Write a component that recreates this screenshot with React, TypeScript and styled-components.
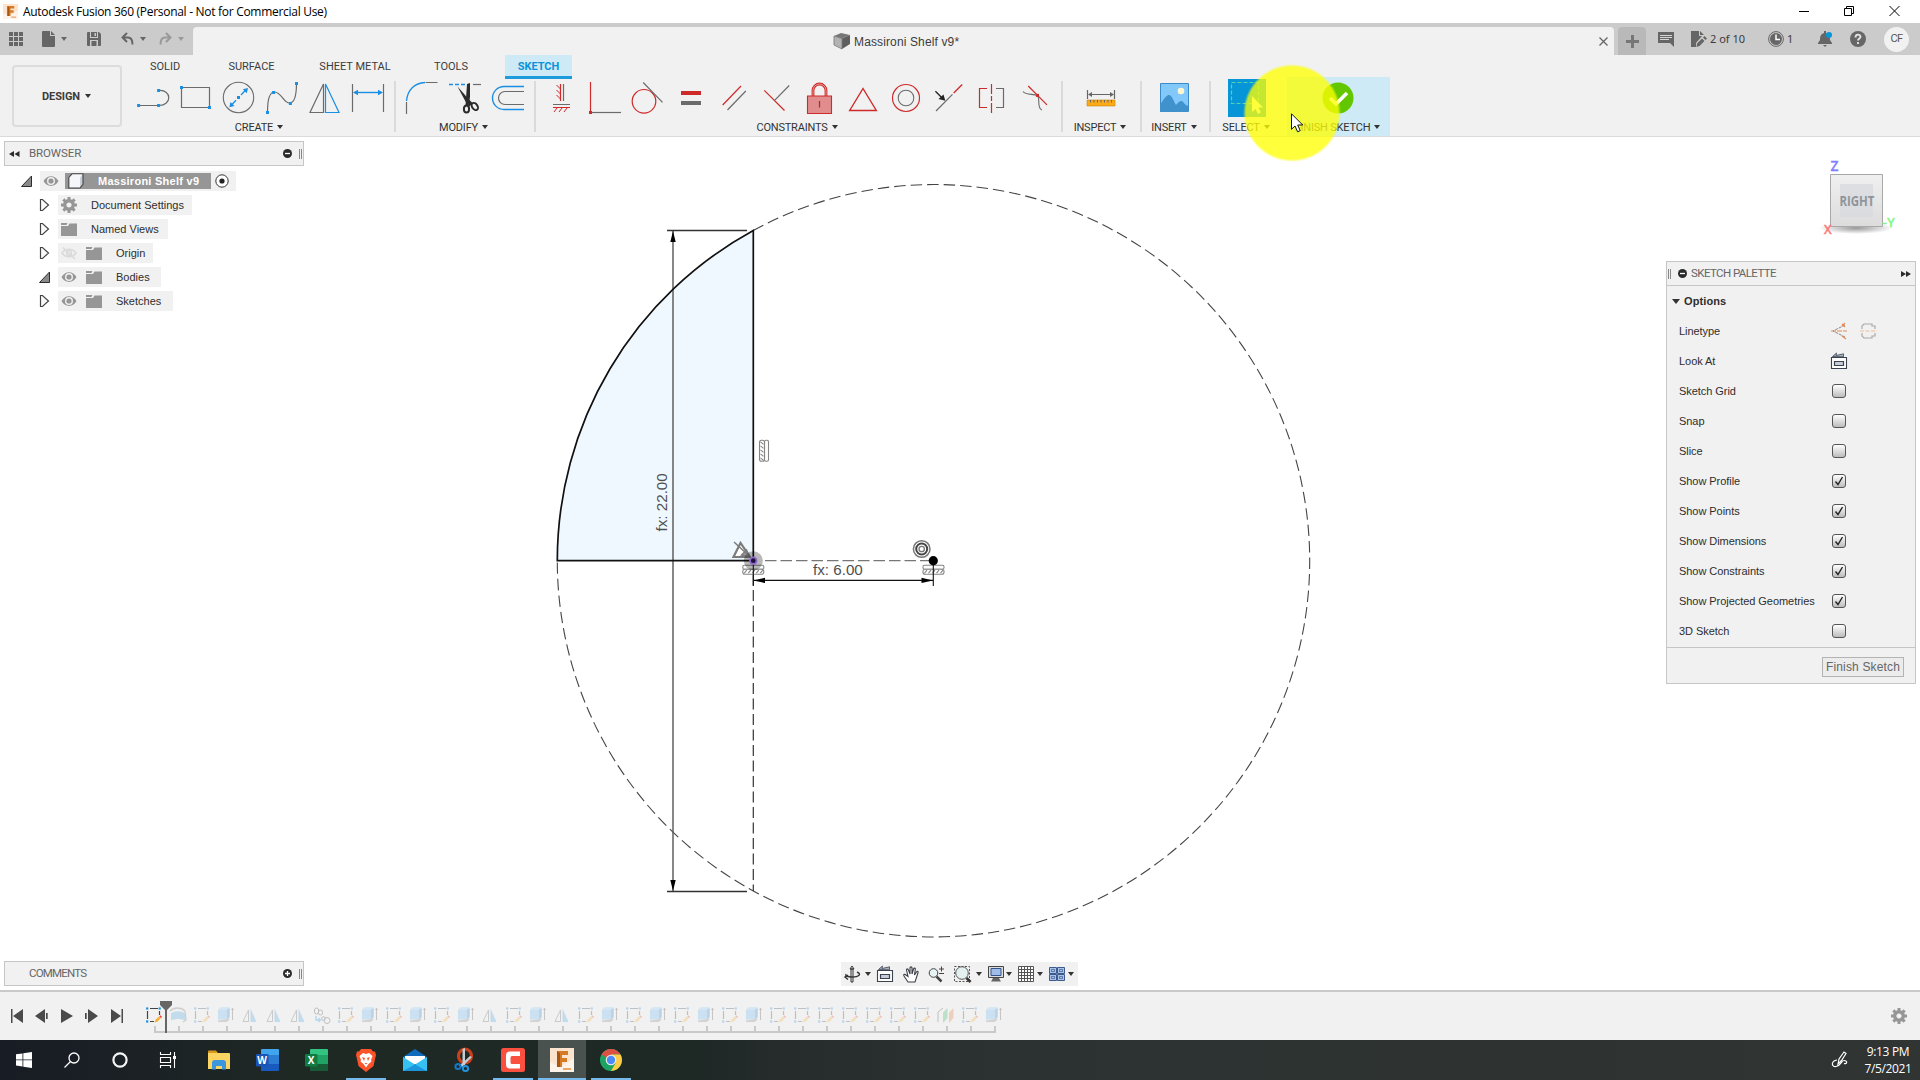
import React from "react";
import styled, { createGlobalStyle } from "styled-components";

const GlobalStyle = createGlobalStyle`
  * { box-sizing: border-box; }
  body { margin: 0; background: #fff; overflow: hidden; }
  svg { display: block; overflow: visible; flex: none; }
`;

const BLUE = "#1a8fe3";
const GRAY = "#6b6b6b";
const RED = "#cf2a2a";

const Window = styled.div`
  position: relative;
  display: flex;
  flex-direction: column;
  width: 1920px;
  height: 1080px;
  overflow: hidden;
  font-family: "Liberation Sans", Arial, sans-serif;
  font-size: 11px;
  color: #3c3c3c;
  background: #fff;
`;

/* ---------- shared bits ---------- */

type GlyphProps = { box: string; children: React.ReactNode };
const Glyph = ({ box, children }: GlyphProps) => {
  const [, , w, h] = box.split(" ").map(Number);
  return (
    <svg width={w} height={h} viewBox={box} fill="none" strokeWidth={1}>
      {children}
    </svg>
  );
};

const Caret = styled.i<{ $size?: number; $color?: string }>`
  flex: none;
  width: 0;
  height: 0;
  border-style: solid;
  border-width: ${(p) => (p.$size ?? 3) + 1}px ${(p) => p.$size ?? 3}px 0;
  border-color: ${(p) => p.$color ?? "#333"} transparent transparent;
`;

/* ---------- title bar ---------- */

const TitleBar = styled.header`
  display: flex;
  align-items: center;
  height: 23px;
  flex: none;
  padding: 0 20px 0 3px;
  background: #fff;
`;
const TitleText = styled.span`
  flex: 1;
  margin-left: 5px;
  font: 12px/20px "Open Sans", sans-serif;
  letter-spacing: -0.29px;
  color: #000;
`;
const WindowButtons = styled.div`
  display: flex;
  gap: 35px;
`;

const FusionMark = ({ size }: { size: number }) => (
  <svg width={size} height={size} viewBox="0 0 24 24">
    <rect width="24" height="24" fill="#fbe3cd" />
    <path d="M0 24V14l10 5 14-9v14z" fill="#fdf3e8" />
    <path d="M7 3h11v4h-6v3h5v4h-5v5H7z" fill="#d67a26" />
    <path d="M7 3l3 2v14H7z" fill="#a75612" />
    <path d="M13 20h8v2h-8z" fill="#eda566" />
  </svg>
);

/* ---------- document tab strip ---------- */

const TabStrip = styled.div`
  display: flex;
  align-items: flex-end;
  height: 32px;
  flex: none;
  background: #cbcbcb;
`;
const QuickAccess = styled.div`
  display: flex;
  align-items: center;
  width: 193px;
  height: 32px;
  padding-left: 9px;
`;
const Gap = styled.span<{ $w: number }>`
  flex: none;
  width: ${(p) => p.$w}px;
`;
const DocumentTab = styled.div`
  display: flex;
  align-items: center;
  width: 1421px;
  height: 28px;
  padding-left: 641px;
  background: #f1f1f1;
  border-radius: 4px 4px 0 0;
`;
const DocumentName = styled.span`
  flex: 1;
  margin: 1px 0 0 4px;
  font-size: 12px;
  letter-spacing: 0.13px;
  color: #3c3c3c;
`;
const NewTab = styled.div`
  display: flex;
  align-items: center;
  justify-content: center;
  width: 28px;
  height: 28px;
  margin-left: 4px;
  background: #b9b9b9;
  border-radius: 4px 4px 0 0;
`;
const StatusArea = styled.div`
  display: flex;
  align-items: center;
  height: 32px;
  margin-left: 12px;
`;
const StatusText = styled.span<{ $w: number }>`
  width: ${(p) => p.$w}px;
  margin-left: 3px;
  font: 11px/16px "Noto Sans", sans-serif;
  white-space: nowrap;
`;
const Avatar = styled.div`
  display: flex;
  align-items: center;
  justify-content: center;
  width: 25px;
  height: 25px;
  border-radius: 50%;
  background: #f1f1f1;
  font: 11px/14px Roboto, sans-serif;
  letter-spacing: -0.5px;
  color: #555;
`;

/* ---------- ribbon ---------- */

const Ribbon = styled.div`
  display: flex;
  height: 82px;
  flex: none;
  background: #f1f1f1;
  border-bottom: 1px solid #dadada;
`;
const Workspace = styled.button`
  display: flex;
  align-items: center;
  justify-content: center;
  gap: 5px;
  width: 110px;
  height: 62px;
  margin: 10px 9px 0 12px;
  padding: 0 1px 0 0;
  background: none;
  border: 2px solid #dcdcdc;
  border-radius: 4px;
  font: bold 11px Roboto, sans-serif;
  letter-spacing: -0.1px;
  color: #3c3c3c;
`;
const RibbonBody = styled.div`
  display: flex;
  flex-direction: column;
`;
const TabRow = styled.nav`
  display: flex;
  height: 24px;
`;
const RibbonTab = styled.div<{ $w: number; $active?: boolean }>`
  width: ${(p) => p.$w}px;
  height: 24px;
  margin-left: ${(p) => (p.$active ? 9 : 0)}px;
  text-align: center;
  font: ${(p) => (p.$active ? "bold" : "normal")} 11px/23px Roboto, sans-serif;
  color: ${(p) => (p.$active ? "#0a93d8" : "#3c3c3c")};
  background: ${(p) => (p.$active ? "#cdeaf6" : "none")};
  border-bottom: ${(p) => (p.$active ? "3px solid #1e9bdc" : "none")};
`;
const ToolRow = styled.div`
  display: flex;
  height: 59px;
  margin-top: -2px;
`;
const ToolGroup = styled.section<{ $w?: number; $active?: boolean }>`
  width: ${(p) => (p.$w ? `${p.$w}px` : "auto")};
  margin-left: ${(p) => (p.$active ? 8 : 0)}px;
  background: ${(p) => (p.$active ? "#cdeaf6" : "none")};
`;
const ToolIcons = styled.div`
  display: flex;
  justify-content: center;
  height: 42px;
`;
const ToolLabel = styled.div`
  display: flex;
  align-items: center;
  justify-content: center;
  gap: 4px;
  height: 17px;
  padding: 1px 2px 0 0;
  font: 11px/16px Roboto, sans-serif;
  letter-spacing: -0.2px;
  color: #333;
  white-space: nowrap;
  & > i { margin-top: -2px; }
`;
const Separator = styled.div`
  width: 11px;
  padding: 4px 4px 0 5px;
  &::before {
    content: "";
    display: block;
    height: 51px;
    background: #dadada;
  }
`;

const Group = ({ label, w, active, children }: { label: string; w?: number; active?: boolean; children: React.ReactNode }) => (
  <ToolGroup $w={w} $active={active}>
    <ToolIcons>{children}</ToolIcons>
    <ToolLabel>
      {label}
      <Caret />
    </ToolLabel>
  </ToolGroup>
);

const Dot = ({ x, y, c = BLUE, s = 3 }: { x: number; y: number; c?: string; s?: number }) => (
  <rect x={x - s / 2} y={y - s / 2} width={s} height={s} fill={c} stroke="none" />
);

const createTools = [
  <>
    <path d="M139 105.5h20M159 90.5c13-1 13 15 0 15" stroke={GRAY} strokeWidth={1.2} />
    <Dot x={138.6} y={105.5} /><Dot x={158.6} y={105.5} /><Dot x={158.6} y={90.5} />
  </>,
  <>
    <path d="M181.5 87.5h28v20h-28z" stroke={GRAY} strokeWidth={1.2} />
    <Dot x={181.5} y={87.5} /><Dot x={209.5} y={107.5} />
  </>,
  <>
    <circle cx="238.5" cy="97.5" r="15.2" stroke={GRAY} strokeWidth={1.1} />
    <path d="M231 105.5l5-5.3M241 95l5-5.3" stroke={BLUE} strokeWidth={1.3} />
    <path d="M248 88l-1.2 5.2-4-4zM229.3 107.2l1.2-5.2 4 4z" fill={BLUE} />
    <Dot x={238.5} y={97.5} />
  </>,
  <>
    <path d="M267.5 112c0-10 1-20 7-20 7 0 9 11 15 11s7-10 7-20" stroke={GRAY} strokeWidth={1.2} />
    <Dot x={267.5} y={112.5} /><Dot x={273.6} y={92.5} /><Dot x={290.4} y={103.5} /><Dot x={296.5} y={83.5} />
  </>,
  <>
    <path d="M323.5 84v28.5h-13.5z" stroke={GRAY} strokeWidth={1.2} />
    <path d="M325.5 84v28.5h13.5z" stroke={BLUE} strokeWidth={1.2} />
  </>,
  <>
    <path d="M352.5 84v28M383.5 84v28" stroke={GRAY} strokeWidth={1.2} />
    <path d="M355 92.5h26" stroke={BLUE} strokeWidth={1.4} />
    <path d="M353 92.5l5-2.7v5.4zM383 92.5l-5-2.7v5.4z" fill={BLUE} />
  </>,
];

const modifyTools = [
  <>
    <path d="M406.5 101c1-11 8-18 18.5-18.5" stroke={BLUE} strokeWidth={1.3} />
    <path d="M406.5 102v12M425.5 82.5h12" stroke={GRAY} strokeWidth={1.2} />
  </>,
  <>
    <path d="M449 84.5h4m2 0h4m2 0h4" stroke={BLUE} strokeWidth={1.3} />
    <path d="M473 84.5h8" stroke={GRAY} strokeWidth={1.2} />
    <path d="M457.5 86.5l11 12.5 4 4-3 3.5-4-5z" fill="#2b2b2b" />
    <path d="M467 84l3-1v14l-1.5 9h-3z" fill="#2b2b2b" />
    <ellipse cx="466.5" cy="109" rx="2.6" ry="3.6" stroke="#2b2b2b" strokeWidth={2} />
    <ellipse cx="474.8" cy="106.5" rx="2.7" ry="3.9" transform="rotate(-35 474.8 106.5)" stroke="#2b2b2b" strokeWidth={2} />
  </>,
  <>
    <path d="M524 86.5h-20a11.5 11.5 0 0 0 0 23h20" stroke={BLUE} strokeWidth={1.4} />
    <path d="M524 91.5h-19a6.5 6.5 0 0 0 0 13h19" stroke={GRAY} strokeWidth={1.2} />
  </>,
];

const constraintTools = [
  <>
    <path d="M560.5 84v17M553 107.5h17" stroke={RED} strokeWidth={1.2} />
    <path d="M556.5 85l4 4m-4 1l4 4m-4 1l4 4M557 108l-3 4m8-4l-3 4m8-4l-3 4" stroke={RED} />
    <path d="M563.5 84v17M553 104.5h17" stroke={GRAY} strokeWidth={1.2} />
  </>,
  <>
    <path d="M590.5 82v29" stroke={RED} strokeWidth={1.2} />
    <path d="M592 112.5h29" stroke={GRAY} strokeWidth={1.2} />
    <Dot x={590.5} y={112.5} c={RED} />
  </>,
  <>
    <circle cx="644" cy="101.3" r="11.8" stroke={RED} strokeWidth={1.2} />
    <path d="M643.2 82.5l19.3 19.8" stroke={GRAY} strokeWidth={1.2} />
  </>,
  <>
    <path d="M681 91h20v4h-20z" fill={RED} />
    <path d="M681 101h20v4h-20z" fill={GRAY} />
  </>,
  <>
    <path d="M722.7 105l18.3-19" stroke={RED} strokeWidth={1.2} />
    <path d="M727.5 110l18.3-19" stroke={GRAY} strokeWidth={1.2} />
  </>,
  <>
    <path d="M764.3 90.3l20.2 20.2" stroke={RED} strokeWidth={1.2} />
    <path d="M774.6 100.3l14.6-14.8" stroke={GRAY} strokeWidth={1.2} />
  </>,
  <>
    <path d="M813 96v-5.5a6.5 6.5 0 0 1 13 0v5.5" stroke={RED} strokeWidth={2.8} />
    <path d="M813 96v-5.5a6.5 6.5 0 0 1 13 0v5.5" stroke="#e9a0a0" strokeWidth={0.9} />
    <path d="M807.5 96h24v17.5h-24z" fill="#e18d8d" stroke={RED} strokeWidth={1.1} />
    <path d="M819.5 101v6.5" stroke="#b22" strokeWidth={1.2} />
  </>,
  <path d="M863 88.5l13.3 22h-26.6z" stroke={RED} strokeWidth={1.4} />,
  <>
    <circle cx="906" cy="98" r="13.5" stroke={RED} strokeWidth={1.2} />
    <circle cx="906" cy="98" r="7.8" stroke={GRAY} strokeWidth={1.1} />
  </>,
  <>
    <path d="M936 111l16.5-16.7" stroke={GRAY} strokeWidth={1.2} />
    <path d="M953.7 93l8.5-8.5" stroke={RED} strokeWidth={1.3} />
    <path d="M935.4 91.3l6 6" stroke="#222" strokeWidth={1.3} />
    <path d="M945.3 100.8l-6.8-1.8 5-4.5z" fill="#222" />
  </>,
  <>
    <path d="M987 88.5h-7.5v19h7.5M991.5 84v10m0 2v5m0 2v10" stroke={RED} strokeWidth={1.2} />
    <path d="M996 88.5h7.5v19h-7.5" stroke={GRAY} strokeWidth={1.2} />
  </>,
  <>
    <path d="M1023 91.5c3 4 10 2 14.5 4 3 4-1 13 4.5 14.5" stroke={GRAY} strokeWidth={1.1} />
    <path d="M1028.2 86l18.8 18.8" stroke={RED} strokeWidth={1.2} />
    <Dot x={1037.5} y={95.4} c={RED} />
  </>,
];

const slots = (icons: React.ReactNode[], x0: number) =>
  icons.map((icon, i) => (
    <Glyph key={i} box={`${x0 + i * 43} 77 43 42`}>
      {icon}
    </Glyph>
  ));

const Spotlight = styled.div`
  position: absolute;
  left: 1243px;
  top: 64px;
  width: 98px;
  height: 98px;
  border-radius: 50%;
  background: radial-gradient(circle, rgba(255, 255, 0, 0.77) 46px, rgba(255, 255, 0, 0) 49px);
`;
const Pointer = styled.div`
  position: absolute;
  left: 1291px;
  top: 113px;
`;

/* ---------- viewport ---------- */

const Viewport = styled.main`
  position: relative;
  display: flex;
  flex-direction: column;
  justify-content: space-between;
  height: 853px;
  flex: none;
`;
const Drawing = styled.div`
  position: absolute;
  inset: 0;
`;
const Docked = styled.div`
  position: relative;
  display: flex;
  justify-content: space-between;
  align-items: flex-start;
  padding: 4px 4px 0;
`;
const DockedBottom = styled.div`
  position: relative;
  display: flex;
  align-items: flex-end;
  padding: 0 4px 4px;
`;

/* Horizontal / vertical constraint badge: a plain bar beside a hatched one. */
const AxisBadge = ({ at }: { at: string }) => (
  <g transform={at} stroke="#858585" fill="#fff">
    <rect x="0.5" y="0.5" width="21" height="4" rx="1.5" strokeWidth="1.1" />
    <rect x="0.5" y="4.500" width="21" height="5" rx="2" strokeWidth="1.1" />
    <path d="M2 8.500l2.500-3M6 8.500l2.500-3M10 8.500l2.500-3M14 8.500l2.500-3M18 8.500l2.500-3" strokeWidth="1.1" />
  </g>
);

const PanelHeader = styled.div`
  display: flex;
  align-items: center;
  width: 300px;
  height: 25px;
  border: 1px solid #c6c6c6;
  background: #f1f1f1;
`;
const PanelTitle = styled.span<{ $left: number; $track: number }>`
  flex: 1;
  margin: -1px 0 0 ${(p) => p.$left}px;
  font: 11.5px/20px Roboto, sans-serif;
  letter-spacing: ${(p) => p.$track}px;
  color: #666;
`;
const Grip = styled.i<{ $flip?: boolean }>`
  width: 3px;
  height: 10px;
  border: solid #888;
  border-width: 0 1px;
  transform: ${(p) => (p.$flip ? "scaleX(-1)" : "none")};
`;
const Tree = styled.div`
  display: flex;
  flex-direction: column;
  gap: 4px;
  padding-top: 5px;
`;
const TreeRow = styled.div<{ $indent: number }>`
  display: flex;
  align-items: center;
  height: 20px;
  padding-left: ${(p) => p.$indent}px;
`;
const TreeItem = styled.div<{ $w: number }>`
  display: flex;
  align-items: center;
  width: ${(p) => p.$w}px;
  height: 20px;
  margin-left: 7px;
  padding-left: 3px;
  background: #f1f1f1;
  color: #2e2e2e;
  white-space: nowrap;
  & > svg + svg { margin-left: 9px; }
  & > span { margin-left: 14px; }
`;
const Selected = styled.div`
  display: flex;
  align-items: center;
  width: 146px;
  height: 16px;
  margin: 0 4px 0 6px;
  padding-left: 3px;
  background: #969696;
  color: #fff;
  font-weight: bold;
  letter-spacing: 0.26px;
  & > span { margin-left: 14px; }
`;

const Twisty = ({ open }: { open?: boolean }) => (
  <svg width="12" height="14" viewBox="0 0 12 14">
    {open ? (
      <path d="M10.5 2v10.5H0.5z" fill="#8a8a8a" stroke="#2d2d2d" />
    ) : (
      <path d="M1.5 1.5h2l6 5.5-6 5.5h-2z" fill="#fafafa" stroke="#444" strokeWidth="1.2" />
    )}
  </svg>
);
const Eye = () => (
  <svg width="16" height="16" viewBox="0 0 16 16">
    <path d="M0.5 8C4 1.5 12 1.5 15.5 8 12 14.5 4 14.5 0.5 8z" fill="#969696" />
    <circle cx="8" cy="8" r="3.3" fill="#969696" stroke="#f1f1f1" strokeWidth="1.4" />
  </svg>
);
const HiddenEye = () => (
  <svg width="16" height="16" viewBox="0 0 16 16" fill="none" stroke="#dadada" strokeWidth="1.6">
    <path d="M1 8C4.5 3 11.5 3 15 8 11.5 13 4.5 13 1 8zM2 2.5l12 11.5" />
    <circle cx="8" cy="8" r="2.5" />
  </svg>
);
const Folder = () => (
  <svg width="16" height="14" viewBox="0 0 16 14">
    <path d="M0 4h7l1.5-2.5H16V14H0z" fill="#969696" />
    <path d="M0 1h6.5L5.5 3H0z" fill="#969696" />
  </svg>
);
const Gear = () => (
  <svg width="16" height="16" viewBox="-8 -8 16 16">
    <circle r="4.3" fill="none" stroke="#969696" strokeWidth="3.4" />
    {[0, 45, 90, 135].map((a) => (
      <path key={a} d="M-1.5-8h3v3h-3zM-1.5 5h3v3h-3z" fill="#969696" transform={`rotate(${a})`} />
    ))}
  </svg>
);
const RoundMark = ({ plus }: { plus?: boolean }) => (
  <svg width="9" height="9" viewBox="0 0 9 9">
    <circle cx="4.5" cy="4.5" r="4.5" fill="#2b2b2b" />
    <path d={plus ? "M2 4.5h5M4.5 2v5" : "M2 4.5h5"} stroke="#fff" strokeWidth="1.3" />
  </svg>
);

const treeItems = [
  { name: "Document Settings", w: 134, icon: "gear", eye: "" },
  { name: "Named Views", w: 110, icon: "folder", eye: "" },
  { name: "Origin", w: 95, icon: "folder", eye: "off" },
  { name: "Bodies", w: 103, icon: "folder", eye: "on", open: true },
  { name: "Sketches", w: 115, icon: "folder", eye: "on" },
];

/* ---------- sketch palette ---------- */

const Palette = styled.aside`
  width: 250px;
  height: 423px;
  margin-top: 120px;
  border: 1px solid #c6c6c6;
  background: #f1f1f1;
`;
const PaletteHeader = styled.div`
  display: flex;
  align-items: center;
  height: 24px;
  padding: 0 4px 0 1px;
  border-bottom: 1px solid #c6c6c6;
`;
const PaletteSection = styled.div`
  display: flex;
  align-items: center;
  gap: 4px;
  height: 30px;
  padding-left: 5px;
  font-weight: bold;
  letter-spacing: 0.1px;
  color: #2e2e2e;
`;
const PaletteRow = styled.div`
  display: flex;
  align-items: center;
  height: 30px;
  padding-left: 12px;
  color: #2e2e2e;
`;
const RowLabel = styled.span`
  width: 152px;
  letter-spacing: -0.05px;
`;
const Checkbox = styled.span`
  display: block;
  width: 14px;
  height: 14px;
  margin: 0 0 1px 1px;
  border: 1px solid #555;
  border-radius: 3px;
  background: linear-gradient(#fff, #bcbcbc);
`;
const PaletteFooter = styled.div`
  display: flex;
  justify-content: flex-end;
  align-items: center;
  height: 36px;
  margin-top: 1px;
  padding: 2px 11px 0 0;
  border-top: 1px solid #c6c6c6;
`;
const FinishButton = styled.button`
  width: 82px;
  height: 20px;
  padding: 1px 0 0;
  border: 1px solid #b3b3b3;
  background: #ececec;
  font: 12px "Liberation Sans", Arial, sans-serif;
  letter-spacing: 0.15px;
  color: #666;
`;
const Check = ({ on }: { on?: boolean }) => (
  <Checkbox>
    {on && (
      <svg width="12" height="12" viewBox="0 0 12 12" fill="none" stroke="#222" strokeWidth="1.4">
        <path d="M2.5 6.5l2.5 3 4.500-7.500" />
      </svg>
    )}
  </Checkbox>
);
const options: [string, boolean][] = [
  ["Sketch Grid", false],
  ["Snap", false],
  ["Slice", false],
  ["Show Profile", true],
  ["Show Points", true],
  ["Show Dimensions", true],
  ["Show Constraints", true],
  ["Show Projected Geometries", true],
  ["3D Sketch", false],
];
const LookAt = () => (
  <svg width="16" height="16" viewBox="0 0 16 16" fill="none" stroke="#3b4350">
    <path d="M1.5 3.500L5.500 0l-.5 2.500L12.500.8v3z" fill="#aab2c0" strokeWidth=".8" />
    <path d="M0.5 4.500h15v11h-15z" strokeWidth="1.1" fill="#fff" />
    <path d="M3.5 8.5h9v4h-9z" fill="#c7ccd6" strokeWidth="1.2" />
  </svg>
);

/* ---------- navigation bar ---------- */

const NavBar = styled.div`
  display: flex;
  align-items: center;
  width: 237px;
  height: 24px;
  margin-left: 537px;
  padding-left: 3px;
  background: #f1f1f1;
`;

/* ---------- timeline ---------- */

const Timeline = styled.div`
  display: flex;
  height: 50px;
  flex: none;
  padding-left: 11px;
  background: #f1f1f1;
  border-top: 2px solid #c9c9c9;
`;
const Transport = styled.div`
  display: flex;
  align-items: center;
  width: 132px;
  height: 48px;
`;
const Track = styled.div`
  position: relative;
  display: flex;
  width: 864px;
  height: 41px;
  padding-top: 15px;
  &::after {
    content: "";
    position: absolute;
    left: 11px;
    right: 12px;
    bottom: 0;
    height: 2px;
    background: #c9c9c9;
  }
`;
const Feature = styled.div<{ $active?: boolean }>`
  display: flex;
  flex-direction: column;
  justify-content: space-between;
  align-items: center;
  width: 24px;
  & > svg {
    margin-right: 2px;
    opacity: ${(p) => (p.$active ? 1 : 0.28)};
  }
  &::after {
    content: "";
    width: 2px;
    height: 7px;
    background: #c9c9c9;
  }
`;
const Playhead = styled.div`
  position: absolute;
  z-index: 1;
  left: 17px;
  top: 9px;
`;
const TimelineSettings = styled.div`
  margin: 16px 13px 0 auto;
`;

const features = "s r s e m m m c s e s e s e m s e m s e s e s e s e s s s s s s s p s e".split(" ");
const FeatureIcon = ({ kind }: { kind: string }) => (
  <svg width="18" height="17" viewBox="0 0 18 17" fill="none">
    {kind === "s" && (
      <>
        <path d="M5 1.5h8M2.5 4v8M14.500 4v4M5 14.500h4" stroke="#444" strokeWidth="1.2" />
        <Dot x={2.2} y={1.5} s={2.2} /><Dot x={14.700} y={1.5} s={2.2} /><Dot x={2.2} y={14.500} s={2.2} />
        <path d="M9.5 15.500l1-2.800 3.500-3.200 1.800 1.800-3.500 3.500z" fill="#f5b133" />
        <path d="M14.300 9.200l1-1 1.800 1.800-1 1z" fill="#e33" />
      </>
    )}
    {kind === "e" && (
      <>
        <path d="M1 13.500v1.500h9l2.500-2.500v-1z" fill="#888" />
        <path d="M1 3l2.500-2.500h9v9.500L10 12.500H1z" fill="#6cb8ee" />
        <path d="M1 3l2.500-2.500h9L10 3z" fill="#8fcbf5" />
        <path d="M10 3l2.500-2.500v9.500L10 12.500z" fill="#3488c8" />
        <path d="M15.500 13V1.500M14.500 3l1-1.800 1 1.800" stroke="#444" strokeWidth=".9" />
      </>
    )}
    {kind === "m" && (
      <>
        <path d="M7.500 3v11.500H2z" stroke="#666" />
        <path d="M9.500 1.5V15h6z" fill="#4fa8e6" />
      </>
    )}
    {kind === "r" && (
      <>
        <path d="M2 6.5c4-3 10-3 14 0V13.500c-4-2-10-2-14 0z" fill="#4fa8e6" />
        <path d="M1 4c4-4 11-4 15 0M16 4l1 9-3 2" stroke="#777" strokeWidth="1.3" />
      </>
    )}
    {kind === "c" && (
      <>
        <rect x="1.500" y="1" width="4" height="6" rx="2" stroke="#444" />
        <rect x="5.500" y="3" width="4" height="5" rx="2" stroke="#444" />
        <circle cx="14" cy="13.500" r="3" stroke="#444" />
        <circle cx="10.500" cy="11.500" r="1.800" stroke="#444" />
        <path d="M3 9v4h4M5.500 11l2 2-2 2" stroke={BLUE} strokeWidth="1.400" />
      </>
    )}
    {kind === "p" && (
      <>
        <path d="M1 15V5l5-4" stroke="#444" />
        <path d="M6 16V5.5l4.500-4.500v10z" fill="#35b765" />
        <path d="M12 16V5.5l4.500-4.500v10z" fill="#e57a43" />
      </>
    )}
  </svg>
);

/* ---------- taskbar ---------- */

const Taskbar = styled.footer`
  display: flex;
  height: 40px;
  flex: none;
  background: linear-gradient(90deg, #181c24 0, #1b2125 140px, #1f2924 300px, #1e2825 700px, #262c2c 780px, #2b3231 1000px, #2d3331 1300px, #303433 1920px);
`;
const Task = styled.div<{ $w: number; $active?: boolean; $bar?: number }>`
  position: relative;
  display: flex;
  align-items: center;
  justify-content: center;
  width: ${(p) => p.$w}px;
  height: 40px;
  background: ${(p) => (p.$active ? "#4a5250" : "none")};
  &::after {
    content: "";
    position: absolute;
    bottom: 0;
    width: ${(p) => p.$bar ?? 0}px;
    height: 2px;
    background: #76b9ed;
  }
`;
const Tray = styled.div`
  display: flex;
  align-items: center;
  margin-left: auto;
  padding-right: 8px;
`;
const Clock = styled.div`
  width: 48px;
  margin-left: 16px;
  font: 12px/17.5px "Open Sans", sans-serif;
  letter-spacing: -0.35px;
  color: #fff;
  text-align: center;
  white-space: nowrap;
`;

const OfficeIcon = ({ letter, top, mid, low, badge }: { letter: string; top: string; mid: string; low: string; badge: string }) => (
  <svg width="24" height="24" viewBox="0 0 24 24">
    <path d="M6 1h16a1 1 0 0 1 1 1v5H5V2a1 1 0 0 1 1-1z" fill={top} />
    <path d="M5 7h18v9H5z" fill={mid} />
    <path d="M5 16h18v6a1 1 0 0 1-1 1H6a1 1 0 0 1-1-1z" fill={low} />
    <rect x="0" y="6" width="12.5" height="12.5" rx="1" fill={badge} />
    <text x="6.2" y="15.8" fill="#fff" fontSize="10" fontWeight="bold" textAnchor="middle" fontFamily="Open Sans, sans-serif">
      {letter}
    </text>
  </svg>
);

export default function App() {
  return (
    <Window>
      <GlobalStyle />
      <TitleBar>
        <FusionMark size={15} />
        <TitleText>Autodesk Fusion 360 (Personal - Not for Commercial Use)</TitleText>
        <WindowButtons>
          <svg width="10" height="10" viewBox="0 0 10 10" stroke="#000"><path d="M0 4.5h10" /></svg>
          <svg width="10" height="10" viewBox="0 0 10 10" fill="none" stroke="#000"><path d="M.5 1.5h7v7h-7zM2.5 1.5v-2h7v7h-2" /></svg>
          <svg width="11" height="10" viewBox="0 0 11 10" stroke="#000"><path d="M.5-1l10 10M10.5-1L.5 9" /></svg>
        </WindowButtons>
      </TitleBar>

      <TabStrip>
        <QuickAccess>
          <svg width="14" height="14" viewBox="0 0 14 14" fill="#666">
            {[0, 5, 10].map((y) => [0, 5, 10].map((x) => <rect key={`${x}-${y}`} x={x} y={y} width="4" height="4" />))}
          </svg>
          <Gap $w={19} />
          <svg width="13" height="16" viewBox="0 0 13 16" fill="#666"><path d="M1 0h7v5h5v10a1 1 0 0 1-1 1H1a1 1 0 0 1-1-1V1a1 1 0 0 1 1-1zM9 0l4 4H9z" /></svg>
          <Gap $w={6} />
          <Caret $color="#666" $size={3.5} />
          <Gap $w={20} />
          <svg width="14" height="14" viewBox="0 0 14 14" fill="#666">
            <path d="M1 0h2v6h8V0h1l2 2v11a1 1 0 0 1-1 1h-2V8H3v6H1a1 1 0 0 1-1-1V1a1 1 0 0 1 1-1zM4 0h6v5H4zM4.5 9h5v5h-5z" />
            <path d="M7.5 1h1.5v3H7.5z" fill="#cbcbcb" />
          </svg>
          <Gap $w={20} />
          <svg width="13" height="12" viewBox="0 0 13 12" fill="none" stroke="#666" strokeWidth="2"><path d="M6 0L1.5 4.5 6 9M2 4.5h5c3 0 4.5 2 4.5 7" /></svg>
          <Gap $w={6} />
          <Caret $color="#666" $size={3.5} />
          <Gap $w={13} />
          <svg width="13" height="12" viewBox="0 0 13 12" fill="none" stroke="#999" strokeWidth="2"><path d="M7 0l4.5 4.5L7 9M11 4.5H6C3 4.5 1.5 6.5 1.5 11.5" /></svg>
          <Gap $w={6} />
          <Caret $color="#999" $size={3.5} />
        </QuickAccess>
        <DocumentTab>
          <svg width="16" height="16" viewBox="0 0 16 16">
            <path d="M0 3l7-3 9 2-8 3.500z" fill="#777" />
            <path d="M0 3l8 2.5V16l-8-4z" fill="#b3b3b3" />
            <path d="M8 5.5L16 2v9l-8 5z" fill="#5f5f5f" />
            <path d="M0 3l8 2.5V16l-8-4z" fill="none" stroke="#777" strokeWidth=".8" />
          </svg>
          <DocumentName>Massironi Shelf v9*</DocumentName>
          <svg width="9" height="9" viewBox="0 0 9 9" stroke="#666" strokeWidth="1.3"><path d="M.5.5l8 8M8.5.5l-8 8" /></svg>
          <Gap $w={6} />
        </DocumentTab>
        <NewTab>
          <svg width="13" height="13" viewBox="0 0 13 13" fill="#767676"><path d="M5 0h3v5h5v3H8v5H5V8H0V5h5z" /></svg>
        </NewTab>
        <StatusArea>
          <svg width="16" height="15" viewBox="0 0 16 15"><path d="M0 0h16v15l-4-4H0z" fill="#666" /><path d="M2 3.5h12M2 5.5h12M2 7.5h9" stroke="#d5d5d5" /></svg>
          <Gap $w={17} />
          <svg width="16" height="16" viewBox="0 0 16 16" fill="#666"><path d="M0 0h8v5h3l-6 7v4H0zM9 0l4 4H9z" /><path d="M13.5 5l2.5 2.5-1.5 1.5-2.5-2.5zM11 7.5l2.5 2.5-5 5-3 1 .5-3.5z" /></svg>
          <StatusText $w={55}>2 of 10</StatusText>
          <Gap $w={3} />
          <svg width="16" height="16" viewBox="0 0 16 16" fill="none"><circle cx="8" cy="8" r="7.4" stroke="#666" /><circle cx="8" cy="8" r="6" fill="#666" /><path d="M8 3.5V8.5h4" stroke="#fff" strokeWidth="1.5" /></svg>
          <StatusText $w={31}>1</StatusText>
          <svg width="15" height="16" viewBox="0 0 15 16" fill="#666"><path d="M6 0h2v2c3 1 4 3 4 7l2 3v1H0v-1l2-3c0-4 1-6 4-7zM5 14h4l-2 2z" /><circle cx="11" cy="4" r="3" fill="#0696d7" /></svg>
          <Gap $w={17} />
          <svg width="16" height="16" viewBox="0 0 16 16" fill="none"><circle cx="8" cy="8" r="8" fill="#666" /><path d="M5.5 6.5c0-4 5-3.5 5-.7C10.5 7.5 8 7.5 8 9.5M8 11v2" stroke="#e3e3e3" strokeWidth="1.9" /></svg>
          <Gap $w={18} />
          <Avatar>CF</Avatar>
        </StatusArea>
      </TabStrip>

      <Ribbon>
        <Workspace>
          DESIGN
          <Caret />
        </Workspace>
        <RibbonBody>
          <TabRow>
            <RibbonTab $w={68}>SOLID</RibbonTab>
            <RibbonTab $w={105}>SURFACE</RibbonTab>
            <RibbonTab $w={102}>SHEET METAL</RibbonTab>
            <RibbonTab $w={90}>TOOLS</RibbonTab>
            <RibbonTab $w={67} $active>SKETCH</RibbonTab>
          </TabRow>
          <ToolRow>
            <Group label="CREATE">{slots(createTools, 131)}</Group>
            <Separator />
            <Group label="MODIFY">{slots(modifyTools, 400)}</Group>
            <Separator />
            <Group label="CONSTRAINTS">{slots(constraintTools, 540)}</Group>
            <Separator />
            <Group label="INSPECT" w={68}>
              <Glyph box="1080 77 42 42">
                <path d="M1087.5 90v9M1114.5 90v9M1090 94.5h22" stroke="#666" strokeWidth={1.2} />
                <path d="M1088 94.5l4-2.5v5zM1114 94.5l-4-2.5v5z" fill="#666" />
                <path d="M1087 100h28v6h-28z" fill="#fbab18" stroke="#c98410" strokeWidth=".6" />
                <path d="M1090.5 100v2.5m3.5-2.5v2.5m3.5-2.5v2.5m3.5-2.5v2.5m3.5-2.5v2.5m3.5-2.5v2.5m3.5-2.5v2.5" stroke="#666" />
              </Glyph>
            </Group>
            <Separator />
            <Group label="INSERT" w={58}>
              <Glyph box="1154 77 42 42">
                <path d="M1160.5 83.5h28v28h-28z" fill="#82c8fb" stroke="#3a8bc8" />
                <path d="M1160 105c5-8 7-10 9-10 3 0 5 7 7 10 4-5 6-5 8-2 1 2 3 2 4 3v6h-28z" fill="#3f92cc" />
                <circle cx="1181" cy="91" r="3.3" fill="#fff7cf" />
              </Glyph>
            </Group>
            <Separator />
            <Group label="SELECT" w={64}>
              <Glyph box="1226 77 42 42">
                <path d="M1228 79h38v38h-38z" fill="#0696d7" />
                <path d="M1231.5 82.5h27v21h-27z" stroke="#55d0b0" strokeDasharray="4 2" strokeWidth={1.2} />
                <path d="M1252 96v16l3.5-3 2.5 5 3-1.5-2.5-5h4.5z" fill="#fff" />
              </Glyph>
            </Group>
            <Group label="FINISH SKETCH" w={103} active>
              <Glyph box="1318 77 42 42">
                <circle cx="1338" cy="98" r="15.5" fill="#63c700" />
                <path d="M1330 98l6 6 11-11" stroke="#fff" strokeWidth={3.6} />
              </Glyph>
            </Group>
          </ToolRow>
        </RibbonBody>
      </Ribbon>

      <Viewport>
        <Drawing>
          <svg width="1920" height="853" viewBox="0 137 1920 853" fill="none">
            <defs>
              <linearGradient id="cube" x1="0" y1="0" x2="0" y2="1">
                <stop offset="0" stopColor="#f0f0f0" />
                <stop offset="1" stopColor="#dcdcdc" />
              </linearGradient>
              <radialGradient id="shade">
                <stop offset="0" stopColor="#777" stopOpacity=".75" />
                <stop offset="1" stopColor="#777" stopOpacity="0" />
              </radialGradient>
            </defs>
            <path d="M753.3 230.5A376.2 376.2 0 0 0 557.3 560.7H753.3z" fill="#eff8fe" />
            <path d="M753.3 230.5A376.2 376.2 0 1 1 557.3 560.7" stroke="#444" strokeWidth="1.1" strokeDasharray="11.5 5" />
            <path d="M753.3 561v330" stroke="#333" strokeWidth="1.2" strokeDasharray="11 4.5" strokeDashoffset="2" />
            <path d="M762 560.7h171" stroke="#777" strokeWidth="1.3" strokeDasharray="11.5 4" strokeDashoffset="-3" />
            <path d="M673 231v660" stroke="#555" strokeWidth="1.4" />
            <path d="M667 230.5h80M667 891.5h80" stroke="#333" strokeWidth="1.3" />
            <path d="M673 231l-2.7 11h5.4zM673 891l-2.7-11h5.4z" fill="#000" />
            <path d="M753.3 230.5A376.2 376.2 0 0 0 557.3 560.7H753.3z" stroke="#111" strokeWidth="1.7" />
            <path d="M753 580.4h180" stroke="#111" strokeWidth="1.2" />
            <path d="M753.5 580.4l11.5-2.7v5.4zM933 580.4l-11.5-2.7v5.4z" fill="#000" />
            <AxisBadge at="translate(742.3 564.7)" />
            <AxisBadge at="translate(922.5 564.7)" />
            <AxisBadge at="translate(769 439.800) rotate(90)" />
            <g fill="#fff" stroke="#7c7c7c">
              <path d="M740.5 543l-7 14h16.5z" strokeWidth="2.2" />
              <path d="M734 542l13 12M749.5 557l-8-2 5-5z" fill="#999" strokeWidth="1.5" />
            </g>
            <circle cx="753.3" cy="560.7" r="9.5" fill="#000" fillOpacity=".28" />
            <path d="M753.3 561v25M933.3 561v25" stroke="#111" strokeWidth="1.1" />
            <circle cx="753.3" cy="560.7" r="3.3" fill="#201040" stroke="#8f6bc8" strokeWidth="1.8" />
            <circle cx="933.3" cy="560.7" r="4.6" fill="#000" />
            <circle cx="921.7" cy="549" r="8.3" fill="#fff" stroke="#777" strokeWidth="1.5" />
            <circle cx="921.7" cy="549" r="5.5" stroke="#444" strokeWidth="2" />
            <circle cx="921.7" cy="549" r="2.7" stroke="#777" strokeWidth="1.3" />
            <g fontFamily="Liberation Sans, sans-serif" fontSize="15.2" fill="#505050">
              <text x="813" y="574.500">fx: 6.00</text>
              <text transform="translate(667 531.5) rotate(-90)">fx: 22.00</text>
            </g>
            <ellipse cx="1856" cy="228" rx="37" ry="6" fill="url(#shade)" />
            <path d="M1830.5 174.5h52v52h-52z" fill="url(#cube)" stroke="#a8a8a8" />
            <path d="M1840 184h33v33h-33z" fill="#d7dade" fillOpacity=".75" />
            <g fontFamily="Open Sans, sans-serif" fontWeight="bold">
              <text x="1839.5" y="206" fontSize="15" fill="#8f959b" textLength="35" lengthAdjust="spacingAndGlyphs">RIGHT</text>
              <g fontFamily="Noto Sans, sans-serif" fontWeight="normal" strokeWidth=".5">
                <text x="1830.5" y="171" fontSize="14" fill="#8080ff" stroke="#8080ff">Z</text>
                <text x="1824" y="234" fontSize="13" fill="#f77" stroke="#f77">X</text>
                <text x="1882.5" y="227" fontSize="13" fill="#7cf77c" stroke="#7cf77c" textLength="12">-Y</text>
              </g>
            </g>
          </svg>
        </Drawing>

        <Docked>
          <div>
            <PanelHeader>
              <Gap $w={4} />
              <svg width="11" height="6" viewBox="0 0 11 6" fill="#2b2b2b"><path d="M0 3l5-3v6zM5.5 3l5-3v6z" /></svg>
              <PanelTitle $left={9} $track={-0.1}>BROWSER</PanelTitle>
              <RoundMark />
              <Gap $w={7} />
              <Grip />
              <Gap $w={1} />
            </PanelHeader>
            <Tree>
              <TreeRow $indent={17}>
                <Twisty open />
                <TreeItem $w={196}>
                  <Eye />
                  <Selected>
                    <svg width="16" height="16" viewBox="0 0 16 16"><path d="M.8 4.5L4 .8h11v10.5L12 15H.8z" fill="#f4f6fa" /><path d="M12 15V4.5L15 1v10z" fill="#c9cdd6" /><path d="M.8 4.5L4 .8h11v10.5L12 15H.8z" fill="none" stroke="#444" strokeWidth="1.1" /></svg>
                    <span>Massironi Shelf v9</span>
                  </Selected>
                  <svg width="14" height="14" viewBox="0 0 14 14"><circle cx="7" cy="7" r="6.2" fill="#fff" stroke="#333" /><circle cx="7" cy="7" r="2.6" fill="#222" /></svg>
                </TreeItem>
              </TreeRow>
              {treeItems.map((t) => (
                <TreeRow key={t.name} $indent={35}>
                  <Twisty open={t.open} />
                  <TreeItem $w={t.w}>
                    {t.eye === "on" && <Eye />}
                    {t.eye === "off" && <HiddenEye />}
                    {t.icon === "gear" ? <Gear /> : <Folder />}
                    <span>{t.name}</span>
                  </TreeItem>
                </TreeRow>
              ))}
            </Tree>
          </div>

          <Palette>
            <PaletteHeader>
              <Grip $flip />
              <Gap $w={7} />
              <RoundMark />
              <PanelTitle $left={4} $track={-0.58}>SKETCH PALETTE</PanelTitle>
              <svg width="10" height="6" viewBox="0 0 10 6" fill="#2b2b2b"><path d="M5 3L0 0v6zM10 3L5 0v6z" /></svg>
            </PaletteHeader>
            <PaletteSection>
              <Caret $size={4.5} />
              Options
            </PaletteSection>
            <PaletteRow>
              <RowLabel>Linetype</RowLabel>
              <svg width="16" height="16" viewBox="0 0 16 16" fill="none" stroke="#888">
                <path d="M14 2L2 8l12 6" strokeDasharray="3 1" />
                <path d="M0 8h16M11 1l3 3M14 0l-3 3M11 13l4 3" stroke="#e88b50" strokeDasharray="5 1" strokeWidth="1.2" />
              </svg>
              <Gap $w={14} />
              <svg width="15" height="16" viewBox="0 0 15 16" fill="none" stroke="#aaa">
                <path d="M1 6V3l2-2h8v2h3v3M1 10v3l2 2h8v-2h3v-3" strokeWidth="1.2" />
                <path d="M-1 8h17" stroke="#f2bd9b" strokeDasharray="4 1.5" strokeWidth="1.2" />
              </svg>
            </PaletteRow>
            <PaletteRow>
              <RowLabel>Look At</RowLabel>
              <LookAt />
            </PaletteRow>
            {options.map(([name, on]) => (
              <PaletteRow key={name}>
                <RowLabel>{name}</RowLabel>
                <Check on={on} />
              </PaletteRow>
            ))}
            <PaletteFooter>
              <FinishButton>Finish Sketch</FinishButton>
            </PaletteFooter>
          </Palette>
        </Docked>

        <DockedBottom>
          <PanelHeader>
            <PanelTitle $left={24} $track={-0.8}>COMMENTS</PanelTitle>
            <RoundMark plus />
            <Gap $w={7} />
            <Grip />
            <Gap $w={1} />
          </PanelHeader>
          <NavBar>
            <svg width="16" height="16" viewBox="0 0 16 16" fill="none" stroke="#333"><path d="M7 16V3h2v13zM8 0L6 3h4z" /><path d="M13 6c5 2 2 5-5 5-4 0-7-1-6-3M4 9L1 11l3 2.5" strokeWidth="1.4" /></svg>
            <Gap $w={5} /><Caret /><Gap $w={6} />
            <LookAt />
            <Gap $w={10} />
            <svg width="16" height="17" viewBox="0 0 16 17" fill="#fff" stroke="#3b3f48" strokeWidth="1.1"><path d="M5 16l-4-6c-1-2 1-2 2-1l2 1.5L3.5 4c0-1.5 1.5-1.5 2 0L7 8V2c0-1.5 2-1.5 2 0v6l1.5-5c.5-1.5 2-1 1.8.3L11.5 9l2-3c1-1.2 2-.3 1.5.8L12 16z" /></svg>
            <Gap $w={9} />
            <svg width="17" height="16" viewBox="0 0 17 16" fill="none"><circle cx="5.5" cy="7" r="4.3" fill="#e7f3f3" stroke="#444" /><path d="M8.5 10.5l5 5" stroke="#444" strokeWidth="2.5" /><path d="M11 3h5M13.5.5v5M11 7.5h5" stroke="#444" /></svg>
            <Gap $w={9} />
            <svg width="17" height="17" viewBox="0 0 17 17" fill="none"><path d="M.5.5h15v15H.5z" stroke="#555" strokeDasharray="2 1.5" /><circle cx="8" cy="7" r="6.3" fill="#e3f0f0" stroke="#555" /><path d="M12.5 12l4 4" stroke="#333" strokeWidth="2.6" /></svg>
            <Gap $w={5} /><Caret /><Gap $w={6} />
            <svg width="16" height="16" viewBox="0 0 16 16" fill="none"><path d="M.5.5h15v11H.5z" fill="#ddd" stroke="#444" /><path d="M3 2.5h10v7H3z" fill="#9fbde6" stroke="#33548c" /><path d="M5 12h6l2 3.5H3z" fill="#666" /></svg>
            <Gap $w={2} /><Caret /><Gap $w={6} />
            <svg width="16" height="16" viewBox="0 0 16 16" fill="#fff" stroke="#555"><path d="M.5.5h15v15H.5zM3.5 0v16M6.5 0v16M9.5 0v16M12.5 0v16M0 3.5h16M0 6.5h16M0 9.5h16M0 12.5h16" /></svg>
            <Gap $w={3} /><Caret /><Gap $w={6} />
            <svg width="16" height="14" viewBox="0 0 16 14" fill="#a9c3e8" stroke="#3d5a8e"><path d="M.5.5h7v6h-7zM8.5.5h7v6h-7zM.5 7.5h7v6h-7zM8.5 7.5h7v6h-7z" /><path d="M2.5 2.5h3v2h-3zM10.5 2.5h3v2h-3zM2.5 9.5h3v2h-3zM10.5 9.5h3v2h-3z" strokeWidth=".7" /></svg>
            <Gap $w={3} /><Caret />
          </NavBar>
        </DockedBottom>
      </Viewport>

      <Timeline>
        <Transport>
          <svg width="12" height="14" viewBox="0 0 12 14" fill="#4a4a4a"><path d="M0 0h1.5v14H0zM12 0v14L2 7z" /></svg>
          <Gap $w={12} />
          <svg width="13" height="14" viewBox="0 0 13 14" fill="#4a4a4a"><path d="M10 0v14L0 7zM11 4h1.7v6H11z" /></svg>
          <Gap $w={13} />
          <svg width="12" height="14" viewBox="0 0 12 14" fill="#4a4a4a"><path d="M0 0l12 7-12 7z" /></svg>
          <Gap $w={12} />
          <svg width="13" height="14" viewBox="0 0 13 14" fill="#4a4a4a"><path d="M3 0l10 7-10 7zM0 4h1.7v6H0z" /></svg>
          <Gap $w={13} />
          <svg width="12" height="14" viewBox="0 0 12 14" fill="#4a4a4a"><path d="M10.5 0H12v14h-1.5zM0 0v14l10-7z" /></svg>
        </Transport>
        <Track>
          <Playhead>
            <svg width="12" height="32" viewBox="0 0 12 32" fill="#666"><path d="M0 0h12v4L7 9v23H5V9L0 4z" /></svg>
          </Playhead>
          {features.map((f, i) => (
            <Feature key={i} $active={i === 0}>
              <FeatureIcon kind={f} />
            </Feature>
          ))}
        </Track>
        <TimelineSettings>
          <Gear />
        </TimelineSettings>
      </Timeline>

      <Taskbar>
        <Task $w={48}>
          <svg width="16" height="16" viewBox="0 0 16 16" fill="#fff"><path d="M0 2.3l6.5-.9v6.1H0zM7.3 1.3L16 0v7.5H7.3zM0 8.3h6.5v6.2L0 13.6zM7.3 8.3H16V16l-8.7-1.3z" /></svg>
        </Task>
        <Task $w={48}>
          <svg width="16" height="16" viewBox="0 0 16 16" fill="none" stroke="#fff" strokeWidth="1.3"><circle cx="10" cy="6" r="5" /><path d="M6.5 9.5L.5 15.5" /></svg>
        </Task>
        <Task $w={48}>
          <svg width="16" height="16" viewBox="0 0 16 16" fill="none" stroke="#f4f4f4" strokeWidth="2.2"><circle cx="8" cy="8" r="6.6" /></svg>
        </Task>
        <Task $w={48}>
          <svg width="16" height="16" viewBox="0 0 16 16" fill="none" stroke="#fff"><path d="M.5 0v2.5h10V0M.5 16v-2.5h10V16M.5 5.5h10v5H.5zM14.5 0v16" strokeWidth="1.1" /><path d="M13 4h3v3h-3z" fill="#fff" stroke="none" /></svg>
        </Task>
        <Gap $w={3} />
        <Task $w={48}>
          <svg width="22" height="20" viewBox="0 0 22 20"><path d="M0 1.5A1 1 0 0 1 1 .5h7l2 2.5H0z" fill="#d99a1c" /><path d="M0 3h21a1 1 0 0 1 1 1v15H0z" fill="#fcd462" /><path d="M4 19.5V13a3 3 0 0 1 3-3h8a3 3 0 0 1 3 3v6.5h-4V16H8v3.5z" fill="#3a96dd" /></svg>
        </Task>
        <Gap $w={1} />
        <Task $w={48}>
          <OfficeIcon letter="W" top="#41a5ee" mid="#2b7cd3" low="#185abd" badge="#1a55b5" />
        </Task>
        <Gap $w={1} />
        <Task $w={48}>
          <OfficeIcon letter="X" top="#33c481" mid="#21a366" low="#185c37" badge="#107c41" />
        </Task>
        <Gap $w={1} />
        <Task $w={48} $bar={40}>
          <svg width="20" height="24" viewBox="0 0 20 24"><path d="M5 1h10l2 2.5h2l1 3.5-1 4-1.5 7L10 24l-7.500-6L1 11 0 7l1-3.5h2z" fill="#fb542b" /><path d="M10 6l3-1 3.5 3-1.5 4 .5 1.5-3 2.5L10 19.5 7.5 16l-3-2.5L5 12 3.5 8 7 5z" fill="#fff" /><path d="M6 9l3 1-1 3zM14 9l-3 1 1 3zM8.5 15h3L10 16.5z" fill="#fb542b" /></svg>
        </Task>
        <Gap $w={1} />
        <Task $w={48}>
          <svg width="24" height="22" viewBox="0 0 24 22"><path d="M0 8L12 0l12 8v3H0z" fill="#0f6cbd" /><path d="M2 7h20v8H2z" fill="#fff" /><path d="M0 8l12 7.5L24 8v14H0z" fill="#35c1f1" /><path d="M12 15.5L24 22H0z" fill="#1d95dc" /></svg>
        </Task>
        <Gap $w={1} />
        <Task $w={48}>
          <svg width="20" height="24" viewBox="0 0 20 24" fill="none"><ellipse cx="11" cy="8" rx="6.5" ry="7" stroke="#c8401c" strokeWidth="3.2" /><path d="M8.5 1L11 0v17H8.5zM5 18l11-10 2 1L8 19z" fill="#c5ccd2" /><circle cx="4" cy="18.5" r="2.6" stroke="#1479c9" strokeWidth="2" /><circle cx="11.5" cy="20.5" r="2.6" stroke="#1e94e0" strokeWidth="2" /></svg>
        </Task>
        <Gap $w={1} />
        <Task $w={48} $bar={40}>
          <svg width="24" height="24" viewBox="0 0 24 24"><rect width="24" height="24" rx="2.5" fill="#f9503f" /><path d="M19 3.5H9a4 4 0 0 0-4 4v9a4 4 0 0 0 4 4h10v-4.5h-8a1.5 1.5 0 0 1-1.5-1.5v-5A1.5 1.5 0 0 1 11 8h8z" fill="#fff" /></svg>
        </Task>
        <Gap $w={1} />
        <Task $w={48} $bar={48} $active>
          <FusionMark size={24} />
        </Task>
        <Gap $w={1} />
        <Task $w={48} $bar={40}>
          <svg width="22" height="22" viewBox="0 0 22 22"><circle cx="11" cy="11" r="11" fill="#1da462" /><path d="M11 11L1.5 5.5A11 11 0 0 1 20.5 5.5H11z" fill="#dd5144" /><path d="M11 5.5h9.5A11 11 0 0 1 11 22l4.8-8.2z" fill="#ffcd46" /><circle cx="11" cy="11" r="5.3" fill="#f1f1f1" /><circle cx="11" cy="11" r="4.2" fill="#4c8bf5" /></svg>
        </Task>
        <Tray>
          <svg width="16" height="16" viewBox="0 0 16 16" fill="none" stroke="#fff" strokeWidth="1.2"><path d="M6 12l1-5 5-7 2 1.5-4.5 7zM5 8c-6 1-6 7-1 6.5 5-.5 5-6 8-6 4 0 3 4 0 3" /></svg>
          <Clock>
            9:13 PM
            <br />
            7/5/2021
          </Clock>
        </Tray>
      </Taskbar>

      <Spotlight />
      <Pointer>
        <svg width="13" height="20" viewBox="0 0 13 20"><path d="M.5.8v15.5l3.5-3.3 2.6 5.8 2.6-1.2-2.5-5.6h5z" fill="#fff" stroke="#111" /></svg>
      </Pointer>
    </Window>
  );
}
